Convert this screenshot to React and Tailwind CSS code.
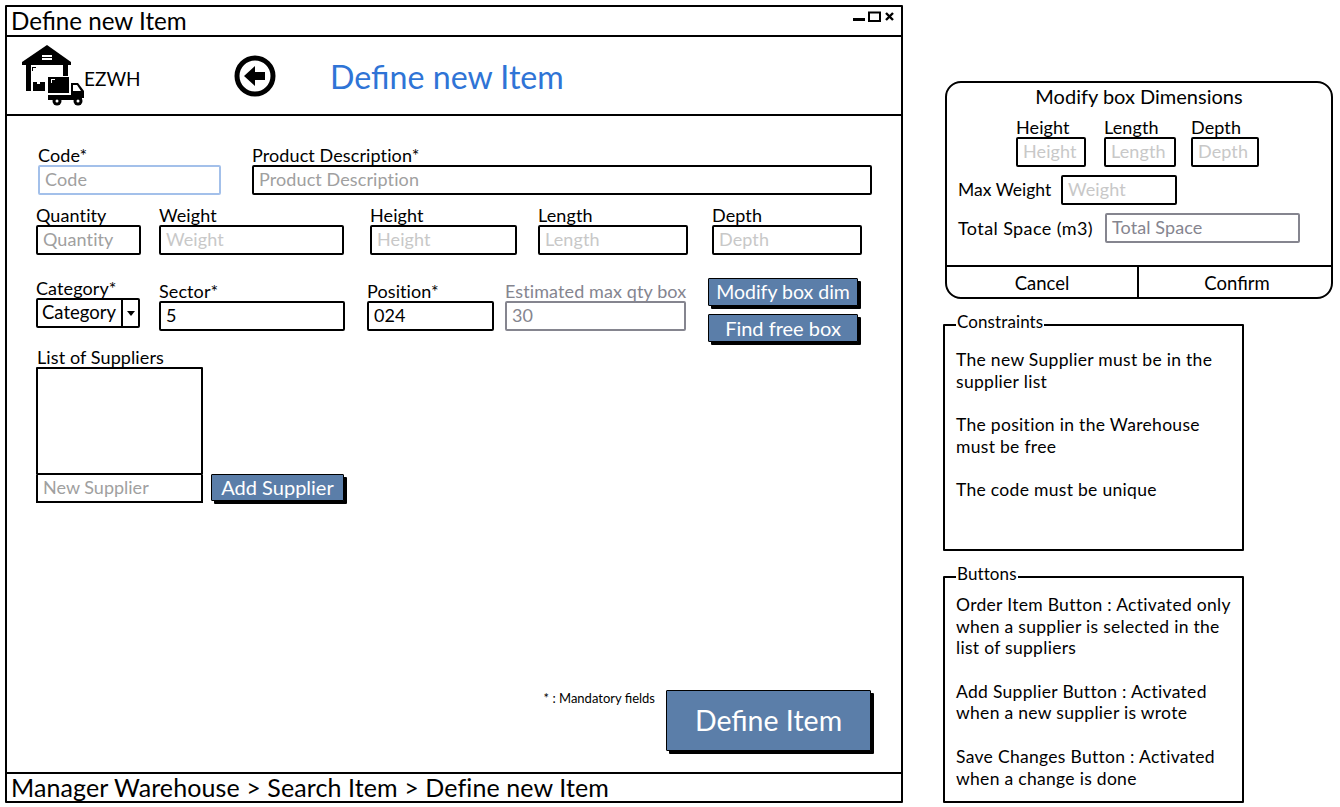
import React from 'react';

const inputBase = 'flex items-center h-[30px] px-[5px] pb-[3px] text-[18px] tracking-[0.1px] leading-none bg-white border-2 rounded-[2px]';
const labelText = 'text-[18px] tracking-[0.1px] leading-[19px] whitespace-nowrap';

const Field = ({ label, placeholder, value, width, tone = 'black', className = '' }) => {
  const labelColor = tone === 'disabled' ? 'text-[#85858f]' : 'text-black';
  const borderColor = tone === 'disabled' ? 'border-[#85858f]' : tone === 'blue' ? 'border-[#a3c0ea]' : 'border-black';
  const textColor = value
    ? tone === 'disabled' ? 'text-[#85858f]' : 'text-black'
    : tone === 'soft' ? 'text-[#c8c8c8]' : 'text-[#a0a0a0]';
  return (
    <div className={`flex flex-col ${width} ${className}`}>
      <span className={`${labelText} ${labelColor}`}>{label}</span>
      <div className={`${inputBase} ${borderColor} ${textColor}`}>{value || placeholder}</div>
    </div>
  );
};

const BlueButton = ({ children, className = '' }) => (
  <button className={`flex items-center justify-center bg-[#5b7ea9] text-white border-[1.5px] border-black rounded-[1px] shadow-[3px_3px_0_#000] ${className}`}>
    {children}
  </button>
);

const WarehouseLogo = () => (
  <svg width="64" height="62" viewBox="0 0 64 62" className="shrink-0">
    <path d="M0 17 L25 0 L49 17 L49 20 L0 20 Z" fill="#000" />
    <rect x="20" y="10" width="10" height="2" fill="#fff" />
    <rect x="20" y="13" width="10" height="2" fill="#fff" />
    <rect x="4" y="20" width="5" height="26" fill="#000" />
    <rect x="41" y="20" width="5" height="11" fill="#000" />
    <path d="M10 22 h4 v1 h-3 v3 h-1 Z" fill="#000" />
    <path d="M11 37 h4 v2 h3 v-2 h5 v9 h-12 Z" fill="#000" />
    <rect x="26" y="32" width="21" height="16" fill="#000" />
    <path d="M29 34 h4 v1 h-3 v3 h-1 Z" fill="#fff" />
    <path d="M49 38 h7 l6 8 v7 h-2 l0 2 h-34 v-5 h23 Z" fill="#000" />
    <path d="M51 40 h4 l4 6 h-8 Z" fill="#fff" />
    <circle cx="35" cy="56" r="4.5" fill="#000" />
    <circle cx="35" cy="56" r="1.5" fill="#fff" />
    <circle cx="56" cy="56" r="4.5" fill="#000" />
    <circle cx="56" cy="56" r="1.5" fill="#fff" />
  </svg>
);

const BackIcon = () => (
  <svg width="42" height="42" viewBox="0 0 42 42" className="shrink-0">
    <circle cx="21" cy="21" r="18" fill="#fff" stroke="#000" strokeWidth="5" />
    <path d="M10 21 L21 11 V17 H31 V25 H21 V31 Z" fill="#000" />
  </svg>
);

const WindowControls = () => (
  <svg width="44" height="12" viewBox="0 0 44 12">
    <rect x="0" y="7" width="12" height="3" fill="#000" />
    <rect x="16" y="1.5" width="11" height="8.5" fill="none" stroke="#000" strokeWidth="2" />
    <path d="M33 2 L40 9 M40 2 L33 9" stroke="#000" strokeWidth="2.4" />
  </svg>
);

const NotesBox = ({ title, children }) => (
  <fieldset className="w-[301px] h-[235px] border-2 border-black rounded-[1px] px-[11px] m-0">
    <legend className="relative -top-[3px] px-[1px] text-[17px] tracking-[0.1px] leading-[18px]">{title}</legend>
    {children}
  </fieldset>
);

const Note = ({ children }) => (
  <p className="text-[17.5px] tracking-[0.3px] leading-[21.6px] mb-[22px]">{children}</p>
);

const App = () => {
  return (
    <div className="w-[1340px] h-[807px] bg-white text-black flex overflow-hidden font-['Lato',sans-serif]">
      {/* Main window */}
      <div className="ml-[5px] mt-[5px] w-[898px] h-[798px] border-2 border-black rounded-[1px] flex flex-col shrink-0">
        <div className="h-[30px] border-b-2 border-black flex items-center justify-between pl-[4px] pr-[4px] shrink-0">
          <span className="text-[24.2px] leading-none">Define new Item</span>
          <div className="-mt-[9px]"><WindowControls /></div>
        </div>

        <div className="h-[79px] border-b-2 border-black flex items-center pl-[15px] shrink-0">
          <WarehouseLogo />
          <span className="text-[19px] -ml-[2px] mt-[7px] w-[150px]">EZWH</span>
          <BackIcon />
          <span className="ml-[54px] mt-[3px] text-[32.2px] text-[#2f74d6] leading-none">Define new Item</span>
        </div>

        <main className="flex-1 flex flex-col pl-[29px] pr-[29px] pt-[30px] pb-[21px]">
          <div className="flex gap-[31px] pl-[2px]">
            <Field label="Code*" placeholder="Code" width="w-[183px]" tone="blue" />
            <Field label="Product Description*" placeholder="Product Description" width="w-[620px]" />
          </div>

          <div className="flex mt-[11px]">
            <Field label="Quantity" placeholder="Quantity" width="w-[105px]" />
            <Field label="Weight" placeholder="Weight" width="w-[185px]" tone="soft" className="ml-[18px]" />
            <Field label="Height" placeholder="Height" width="w-[147px]" tone="soft" className="ml-[26px]" />
            <Field label="Length" placeholder="Length" width="w-[150px]" tone="soft" className="ml-[21px]" />
            <Field label="Depth" placeholder="Depth" width="w-[150px]" tone="soft" className="ml-[24px]" />
          </div>

          <div className="flex mt-[23px] items-start">
            <div className="flex flex-col w-[104px]">
              <span className={`${labelText} mt-[1px]`}>Category*</span>
              <div className="flex h-[30px] border-2 border-black rounded-[2px] text-[18.5px] leading-none items-stretch">
                <span className="flex-1 flex items-center pl-[4px] pb-[2px]">Category</span>
                <span className="w-[17px] border-l-2 border-black flex items-center justify-center">
                  <svg width="8" height="5" viewBox="0 0 8 5"><path d="M0 0 H8 L4 5 Z" fill="#000" /></svg>
                </span>
              </div>
            </div>
            <Field label="Sector*" value="5" width="w-[186px]" className="ml-[19px] mt-[4px]" />
            <Field label="Position*" value="024" width="w-[127px]" className="ml-[22px] mt-[4px]" />
            <Field label="Estimated max qty box" value="30" width="w-[181px]" tone="disabled" className="ml-[11px] mt-[4px]" />
            <div className="flex flex-col gap-[8px] ml-[22px]">
              <BlueButton className="w-[150px] h-[28px] text-[19.5px]">Modify box dim</BlueButton>
              <BlueButton className="w-[150px] h-[28px] text-[20px]">Find free box</BlueButton>
            </div>
          </div>

          <div className="flex flex-col w-[167px] mt-[6px]">
            <span className={`${labelText} pl-[1px]`}>List of Suppliers</span>
            <div className="h-[108px] border-2 border-black rounded-[1px]" />
          </div>
          <div className="flex items-start">
            <div className="w-[167px] h-[28px] border-2 border-t-0 border-black flex items-center px-[5px] pb-[2px] text-[18px] text-[#a0a0a0]">New Supplier</div>
            <BlueButton className="ml-[8px] -mt-[1px] w-[133px] h-[27px] pb-[2px] text-[20px]">Add Supplier</BlueButton>
          </div>

          <div className="mt-auto flex justify-end items-start">
            <span className="text-[13px] leading-none mt-[2px] mr-[11px]">* : Mandatory fields</span>
            <BlueButton className="w-[205px] h-[61px] text-[28.5px] mr-[1px]">Define Item</BlueButton>
          </div>
        </main>

        <div className="h-[29px] border-t-2 border-black flex items-center pl-[4px] text-[25px] tracking-[0.1px] shrink-0">
          Manager Warehouse &gt; Search Item &gt; Define new Item
        </div>
      </div>

      {/* Right column */}
      <div className="ml-[40px] flex flex-col items-start">
        <div className="mt-[81px] ml-[2px] w-[388px] h-[218px] border-2 border-black rounded-[16px] flex flex-col">
          <div className="flex-1 flex flex-col">
            <h2 className="text-center text-[20px] leading-[22px] mt-[2px]">Modify box Dimensions</h2>
            <div className="flex pl-[69px] mt-[11px]">
              <Field label="Height" placeholder="Height" width="w-[70px]" tone="soft" />
              <Field label="Length" placeholder="Length" width="w-[72px]" tone="soft" className="ml-[18px]" />
              <Field label="Depth" placeholder="Depth" width="w-[68px]" tone="soft" className="ml-[15px]" />
            </div>
            <div className="flex items-center mt-[8px] pl-[11px]">
              <span className="text-[17.5px] w-[103px] whitespace-nowrap">Max Weight</span>
              <div className={`${inputBase} w-[116px] border-black text-[#c8c8c8]`}>Weight</div>
            </div>
            <div className="flex items-center mt-[8px] pl-[11px]">
              <span className="text-[18px] tracking-[0.4px] w-[147px] whitespace-nowrap">Total Space (m3)</span>
              <div className={`${inputBase} w-[195px] border-[#85858f] text-[#85858f]`}>Total Space</div>
            </div>
          </div>
          <div className="h-[32px] border-t-2 border-black flex text-[18.5px]">
            <span className="w-[192px] border-r-2 border-black flex items-center justify-center pt-[3px]">Cancel</span>
            <span className="flex-1 flex items-center justify-center pt-[3px] pl-[4px]">Confirm</span>
          </div>
        </div>

        <div className="mt-[17px]">
          <NotesBox title="Constraints">
            <div className="pt-[15px]">
              <Note>The new Supplier must be in the supplier list</Note>
              <Note>The position in the Warehouse must be free</Note>
              <Note>The code must be unique</Note>
            </div>
          </NotesBox>
        </div>

        <div className="mt-[17px]">
          <NotesBox title="Buttons">
            <div className="pt-[8px]">
              <Note>Order Item Button : Activated only when a supplier is selected in the list of suppliers</Note>
              <Note>Add Supplier Button : Activated when a new supplier is wrote</Note>
              <Note>Save Changes Button : Activated when a change is done</Note>
            </div>
          </NotesBox>
        </div>
      </div>
    </div>
  );
};

export default App;
